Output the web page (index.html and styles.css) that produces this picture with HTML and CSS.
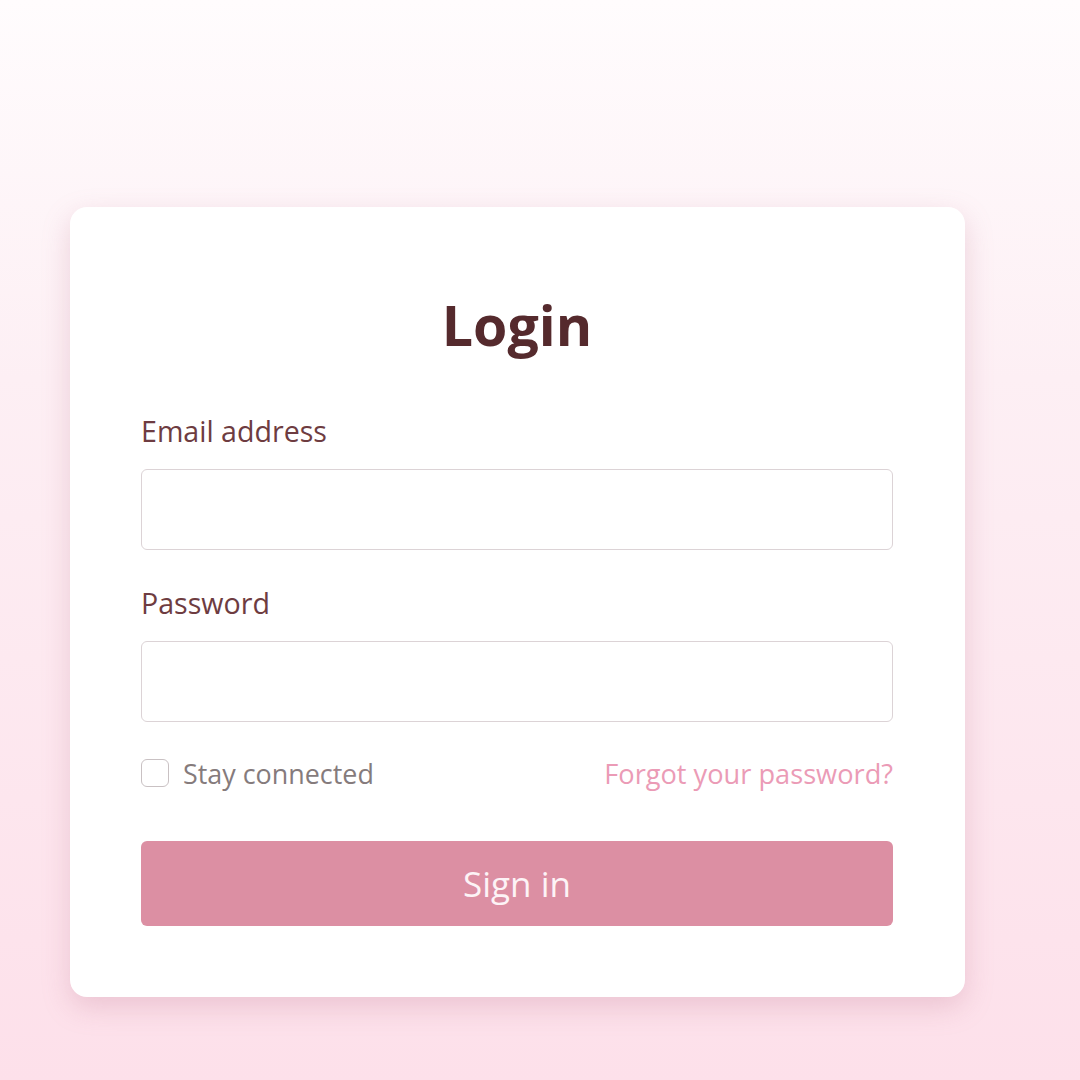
FILE: index.html
```html
<!DOCTYPE html>
<html lang="en">
<head>
    <meta charset="UTF-8">
    <meta name="viewport" content="width=device-width, initial-scale=1.0">
    <title>Login</title>
    <link rel="stylesheet" href="styles.css">
</head>
<body>
    <div class="login-card">
        <h1 class="login-title">Login</h1>

        <label class="field-label" for="email">Email address</label>
        <input class="field-input" type="email" id="email">

        <label class="field-label second" for="password">Password</label>
        <input class="field-input" type="password" id="password">

        <div class="options-row">
            <label class="remember">
                <input type="checkbox" class="remember-box">
                <span>Stay connected</span>
            </label>
            <a class="forgot-link" href="#">Forgot your password?</a>
        </div>

        <button class="signin-button">Sign in</button>
    </div>
</body>
</html>
```

FILE: styles.css
```css
/* page */
html {
    height: 100%;
}

body {
    font-family: "Open Sans", "Noto Sans", sans-serif;
    margin: 0;
    padding: 207px 0 0 70px;
    min-height: 100%;
    box-sizing: border-box;
    background: linear-gradient(to bottom, #fffcfd 0%, #fdeff4 35%, #fde0ea 100%);
}

/* card */
.login-card {
    width: 895px;
    height: 790px;
    box-sizing: border-box;
    padding: 83px 72px 0 71px;
    background: #fff;
    border-radius: 17px;
    box-shadow: 0 10px 28px rgba(190, 120, 145, 0.28);
    display: flex;
    flex-direction: column;
}

.login-title {
    margin: 0 0 51px;
    height: 70px;
    line-height: 70px;
    text-align: center;
    font-size: 55.5px;
    font-weight: 700;
    color: #552a2d;
}

/* fields */
.field-label {
    display: block;
    height: 40px;
    line-height: 40px;
    margin-bottom: 18px;
    font-size: 28.6px;
    color: #6e3c41;
}

.field-label.second {
    margin-top: 33px;
}

.field-input {
    display: block;
    width: 100%;
    height: 81px;
    box-sizing: border-box;
    border: 1.5px solid #dcd3d6;
    border-radius: 6px;
    background: #fff;
    font-family: inherit;
    font-size: 26px;
    padding: 0 18px;
    outline: none;
}

/* remember + forgot */
.options-row {
    margin-top: 31px;
    height: 40px;
    display: flex;
    align-items: center;
    justify-content: space-between;
}

.remember {
    display: flex;
    align-items: center;
    gap: 14px;
    font-size: 26.9px;
    color: #857b7c;
}

.remember-box {
    appearance: none;
    margin: 0;
    width: 28px;
    height: 28px;
    border: 1.5px solid #c9c1c3;
    border-radius: 6px;
    background: #fff;
}

.forgot-link {
    font-size: 27.2px;
    color: #eb9bb6;
    text-decoration: none;
}

/* button */
.signin-button {
    margin-top: 48px;
    height: 85px;
    width: 100%;
    border: none;
    border-radius: 6px;
    background: #dc8fa3;
    color: #fdf3f6;
    font-family: inherit;
    font-size: 35px;
    cursor: pointer;
}
```
